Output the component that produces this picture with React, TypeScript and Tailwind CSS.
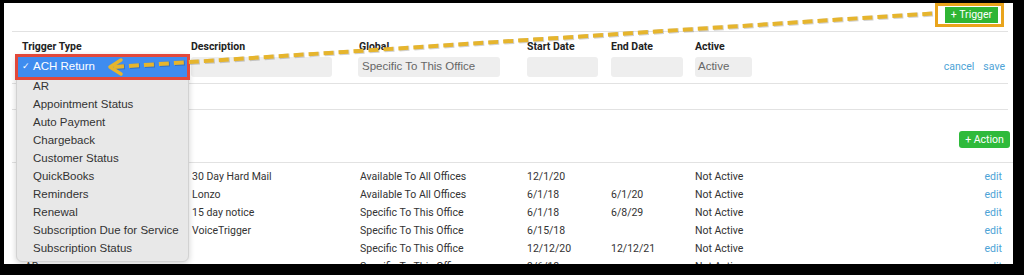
import React from "react";

const rows: string[][] = [
  ["", "30 Day Hard Mail", "Available To All Offices", "12/1/20", "", "Not Active"],
  ["", "Lonzo", "Available To All Offices", "6/1/18", "6/1/20", "Not Active"],
  ["", "15 day notice", "Specific To This Office", "6/1/18", "6/8/29", "Not Active"],
  ["", "VoiceTrigger", "Specific To This Office", "6/15/18", "", "Not Active"],
  ["", "", "Specific To This Office", "12/12/20", "12/12/21", "Not Active"],
  ["AR", "", "Specific To This Office", "9/6/18", "", "Not Active"],
];

const menu = [
  "AR",
  "Appointment Status",
  "Auto Payment",
  "Chargeback",
  "Customer Status",
  "QuickBooks",
  "Reminders",
  "Renewal",
  "Subscription Due for Service",
  "Subscription Status",
];

export default function App() {
  return (
    <div className="w-[1024px] h-[275px] bg-black pl-[4px] pt-[3px] overflow-hidden">
      <div className="relative w-[1009px] h-[261px] bg-white overflow-hidden font-['Roboto',sans-serif] text-[10.5px] text-[#333]">
        {/* top bar */}
        <div className="h-[28px] flex justify-end pr-[9px]">
          <div className="w-[69px] h-[24px] border-[3px] border-[#e9a41c] flex items-center pl-[7px] pr-[3px] py-[1px]">
            <div className="flex-1 h-full bg-[#2fb534] text-white flex items-center justify-center text-[10.5px]">
              + Trigger
            </div>
          </div>
        </div>

        {/* form */}
        <div className="ml-[8px] mr-[5px] border-t border-[#e2e2e2]">
          <div className="grid grid-cols-[169px_168px_168px_84px_84px_1fr] gap-y-[3px] pl-[10px] pr-[3px] pt-[8px] pb-[6px]">
            <div className="h-[14px] leading-[14px] font-bold text-[#222]">Trigger Type</div>
            <div className="h-[14px] leading-[14px] font-bold text-[#222]">Description</div>
            <div className="h-[14px] leading-[14px] font-bold text-[#222]">Global</div>
            <div className="h-[14px] leading-[14px] font-bold text-[#222]">Start Date</div>
            <div className="h-[14px] leading-[14px] font-bold text-[#222]">End Date</div>
            <div className="h-[14px] leading-[14px] font-bold text-[#222]">Active</div>

            <div className="h-[20px]" />
            <div className="h-[20px] w-[141px] rounded-[3px] bg-[#eeeeee]" />
            <div className="h-[20px] w-[142px] -ml-[1px] rounded-[3px] bg-[#eeeeee] flex items-center pl-[4px] font-['Liberation_Sans',Arial,sans-serif] text-[11.5px] text-[#666]">
              Specific To This Office
            </div>
            <div className="h-[20px] w-[71px] rounded-[3px] bg-[#eeeeee]" />
            <div className="h-[20px] w-[72px] rounded-[3px] bg-[#eeeeee]" />
            <div className="flex items-center justify-between">
              <div className="h-[20px] w-[57px] rounded-[3px] bg-[#eeeeee] flex items-center pl-[3px] font-['Liberation_Sans',Arial,sans-serif] text-[11.5px] text-[#666]">
                Active
              </div>
              <div className="flex gap-[9px] text-[#4da3d6]">
                <span>cancel</span>
                <span>save</span>
              </div>
            </div>
          </div>
        </div>

        <div className="ml-[8px] mr-[5px] border-t border-[#e2e2e2] h-[26px]" />

        <div className="ml-[8px] mr-[5px] border-t border-[#e2e2e2] h-[53px] flex justify-end items-start pt-[21px]">
          <div className="-mr-[2px] h-[17px] w-[51px] rounded-[3px] bg-[#2fba3b] text-white flex items-center justify-center text-[10.5px]">
            + Action
          </div>
        </div>

        {/* table */}
        <div className="ml-[8px] border-t border-[#e2e2e2] pt-[5px] pr-[11px]">
          {rows.map((r, i) => (
            <div
              key={i}
              className="grid grid-cols-[169px_168px_168px_84px_84px_1fr] pl-[10px] h-[18px] leading-[18px]"
            >
              <div className="pl-[3px]">{r[0]}</div>
              <div className="pl-[1px]">{r[1]}</div>
              <div className="pl-[1px]">{r[2]}</div>
              <div>{r[3]}</div>
              <div>{r[4]}</div>
              <div className="flex justify-between">
                <span>{r[5]}</span>
                <span className="text-[#4da3d6]">edit</span>
              </div>
            </div>
          ))}
        </div>

        {/* dropdown menu overlay */}
        <div className="absolute left-[12px] top-[51px] w-[173px] h-[208px] rounded-[6px] bg-[#e8e8e8] border border-[#d2d2d2] shadow-[0_2px_6px_rgba(0,0,0,0.18)] pt-[22px] pl-[16px] font-['Liberation_Sans',Arial,sans-serif] text-[11.5px] text-[#333]">
          {menu.map((m) => (
            <div key={m} className="h-[18px] leading-[18px] whitespace-nowrap">
              {m}
            </div>
          ))}
        </div>

        {/* highlighted selection with red annotation box */}
        <div className="absolute left-[11px] top-[51px] w-[175px] h-[26px] border-[3px] border-[#e2483a] bg-[#3f8cef] text-white flex items-center pl-[4px] font-['Liberation_Sans',Arial,sans-serif] text-[11.5px]">
          <span className="w-[11px] text-[9px]">✓</span>
          <span>ACH Return</span>
        </div>

        {/* yellow dashed arrow annotation */}
        <svg
          className="absolute left-0 top-0 pointer-events-none"
          width="1009"
          height="261"
          viewBox="0 0 1009 261"
        >
          <line
            x1="111"
            y1="64.5"
            x2="929"
            y2="11"
            stroke="rgba(0,0,0,0.18)"
            strokeWidth="5"
            strokeDasharray="10 5"
          />
          <line
            x1="110"
            y1="64"
            x2="928"
            y2="10.5"
            stroke="#e6b52d"
            strokeWidth="4"
            strokeDasharray="10 5"
          />
          <polyline
            points="117,57 106,64 117,71"
            fill="none"
            stroke="#e6b52d"
            strokeWidth="3.5"
            strokeLinecap="round"
            strokeLinejoin="round"
          />
        </svg>
      </div>
    </div>
  );
}
